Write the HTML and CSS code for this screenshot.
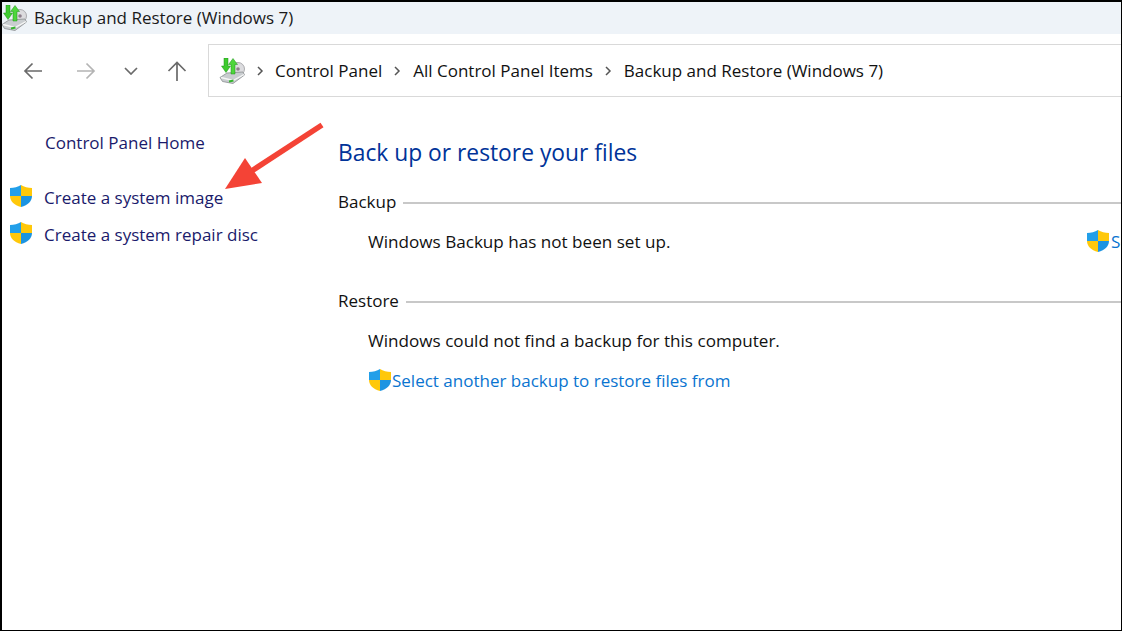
FILE: index.html
```html
<!DOCTYPE html>
<html lang="en">
<head>
<meta charset="utf-8">
<title>Backup and Restore (Windows 7)</title>
<link rel="stylesheet" href="styles.css">
</head>
<body>
<svg class="defs" width="0" height="0" aria-hidden="true">
  <defs>
    <symbol id="shield" viewBox="0 0 22 22">
      <path d="M11 0C8 2 4 3 0 3v8h11z" fill="#229fe9"/>
      <path d="M11 0c3 2 7 3 11 3v8H11z" fill="#ffc80a"/>
      <path d="M0 11c0 5 4 9 11 11V11z" fill="#ffc80a"/>
      <path d="M22 11c0 5-4 9-11 11V11z" fill="#1c94e2"/>
    </symbol>
    <symbol id="drive" viewBox="0 0 26 26">
      <circle cx="19" cy="11" r="6.500" fill="#dcdcdf" stroke="#9a9a9e" stroke-width=".8"/>
      <circle cx="19" cy="11" r="1.800" fill="#8d7f8c"/>
      <path d="M1 19.500L8 15l16-1 1.500 3L14 25.500 3.500 23.500z" fill="#c9cdd0" stroke="#8a8e90" stroke-width=".8"/>
      <path d="M2 19.500l12 3 11-6" fill="none" stroke="#f6f6f6" stroke-width="1.300"/>
      <path d="M10 23.500l4.500-1" stroke="#35b52e" stroke-width="1.800"/>
      <path d="M5 0h4v8h2.500L7 14.500 2.500 8H5z" fill="#3ecb2e" stroke="#1d8f1a" stroke-width=".5"/>
      <path d="M12 16V6.500H9.500L14 .5l4.500 6H16V16z" fill="#4ed63c" stroke="#1d8f1a" stroke-width=".5"/>
    </symbol>
    <symbol id="sep" viewBox="0 0 8 10">
      <path d="M2 1l4 4-4 4" fill="none" stroke="#555" stroke-width="1.500"/>
    </symbol>
  </defs>
</svg>
<div class="window">
  <header class="titlebar">
    <svg class="title-icon"><use href="#drive"/></svg>
    <span class="title-text">Backup and Restore (Windows 7)</span>
  </header>
  <nav class="navbar">
    <div class="nav-buttons">
      <svg class="nav-btn" viewBox="0 0 20 18"><path d="M19 9H2M9.500 1.500L2 9l7.500 7.500" fill="none" stroke="#6a6a6a" stroke-width="1.700"/></svg>
      <svg class="nav-btn forward" viewBox="0 0 20 18"><path d="M1 9h17M10.500 1.500L18 9l-7.500 7.500" fill="none" stroke="#b4b4b4" stroke-width="1.700"/></svg>
      <svg class="nav-btn chevron" viewBox="0 0 14 8"><path d="M1 1l6 6 6-6" fill="none" stroke="#6a6a6a" stroke-width="1.700"/></svg>
      <svg class="nav-btn up" viewBox="0 0 20 20"><path d="M10 20V2M1.500 10L10 1.500 18.500 10" fill="none" stroke="#6a6a6a" stroke-width="1.700"/></svg>
    </div>
    <div class="address">
      <svg class="addr-icon"><use href="#drive"/></svg>
      <svg class="sep"><use href="#sep"/></svg>
      <span>Control Panel</span>
      <svg class="sep"><use href="#sep"/></svg>
      <span>All Control Panel Items</span>
      <svg class="sep"><use href="#sep"/></svg>
      <span>Backup and Restore (Windows 7)</span>
    </div>
  </nav>
  <div class="content">
    <aside class="sidebar">
      <a class="side-home">Control Panel Home</a>
      <ul class="side-tasks">
        <li class="side-task"><svg class="shield"><use href="#shield"/></svg><a>Create a system image</a></li>
        <li class="side-task"><svg class="shield"><use href="#shield"/></svg><a>Create a system repair disc</a></li>
      </ul>
    </aside>
    <main class="main">
      <h1 class="heading">Back up or restore your files</h1>
      <section class="group backup">
        <div class="group-head"><span>Backup</span><i class="rule"></i></div>
        <div class="row status-row">
          <span>Windows Backup has not been set up.</span>
          <a class="setup"><svg class="shield"><use href="#shield"/></svg><span class="link">Set up backup</span></a>
        </div>
      </section>
      <section class="group restore">
        <div class="group-head"><span>Restore</span><i class="rule"></i></div>
        <div class="row">Windows could not find a backup for this computer.</div>
        <a class="row restore-link"><svg class="shield"><use href="#shield"/></svg><span class="link">Select another backup to restore files from</span></a>
      </section>
    </main>
  </div>
  <svg class="callout" viewBox="0 0 110 80" aria-hidden="true">
    <path d="M102 5L30 52" stroke="#f44336" stroke-width="5.500" fill="none"/>
    <path d="M5 69L25 38 42 63z" fill="#f44336"/>
  </svg>
</div>
</body>
</html>
```
FILE: styles.css
```css
* { box-sizing: border-box; }
html, body { margin: 0; height: 100%; }
body { background: #fff; overflow: hidden; }
.defs { position: absolute; }
a { color: inherit; text-decoration: none; }

.window {
  position: relative;
  width: 1122px;
  height: 631px;
  display: flex;
  flex-direction: column;
  overflow: hidden;
  border-style: solid;
  border-color: #000;
  border-width: 2px 1px 1px 2px;
  font-family: "Open Sans", "Noto Sans", sans-serif;
  font-size: 17px;
  color: #111;
}

.titlebar {
  flex: none;
  height: 32px;
  display: flex;
  align-items: center;
  background: #eef3f8;
  padding-bottom: 1px;
}
.title-icon { width: 26px; height: 26px; margin-left: -1px; flex: none; }
.title-text { margin-left: 7px; font-size: 17px; color: #1a1a1a; }

.navbar {
  flex: none;
  height: 63px;
  display: flex;
  align-items: flex-start;
  padding-top: 10px;
}
.nav-buttons { width: 206px; height: 53px; flex: none; display: flex; align-items: center; }
.nav-btn { width: 20px; height: 18px; margin-left: 21px; flex: none; }
.forward { margin-left: 33px; }
.chevron { width: 14px; height: 8px; margin-left: 28px; }
.up { width: 20px; height: 20px; margin-left: 29px; }

.address {
  width: 930px;
  height: 53px;
  flex: none;
  display: flex;
  align-items: center;
  border: 1px solid #d9d9d9;
  border-right: 0;
  padding-left: 10px;
  white-space: nowrap;
}
.addr-icon { width: 26px; height: 26px; flex: none; }
.sep { width: 8px; height: 10px; margin: 0 12px 0 11px; flex: none; }
.addr-icon + .sep { margin: 0 11px; }

.content { flex: 1; display: flex; min-height: 0; }

.sidebar { width: 336px; flex: none; color: #1a1a6b; padding-top: 34px; }
.side-home { display: block; margin-left: 43px; line-height: 24px; }
.side-tasks { list-style: none; margin: 22px 0 0; padding: 0; }
.side-task { display: flex; align-items: center; height: 37px; padding-left: 8px; gap: 12px; }
.side-task a { margin-top: 4px; }
.shield { width: 22px; height: 22px; flex: none; }

.main { flex: 1; min-width: 0; }
.heading {
  margin: 0;
  padding-top: 39px;
  font-size: 22.800px;
  line-height: 34px;
  font-weight: 400;
  color: #003399;
}
.backup { margin-top: 19px; }
.restore { margin-top: 27px; }
.group-head { display: flex; align-items: center; height: 24px; gap: 7px; }
.rule { flex: 1; height: 2px; background: #c8c8c8; margin-top: 3px; }
.row { display: flex; align-items: center; margin-left: 30px; height: 40px; white-space: nowrap; font-size: 17.100px; }
.status-row { margin-top: 8px; }
.restore .row:nth-child(2) { margin-top: 8px; }
.setup { display: flex; align-items: center; gap: 2px; margin-left: auto; width: 34px; flex: none; }
.restore-link { gap: 1px; font-size: 17px; }
.restore-link .shield { margin-left: 1px; }
.link { color: #0a74d0; }

.callout {
  position: absolute;
  left: 218px;
  top: 118px;
  width: 110px;
  height: 80px;
}
```
